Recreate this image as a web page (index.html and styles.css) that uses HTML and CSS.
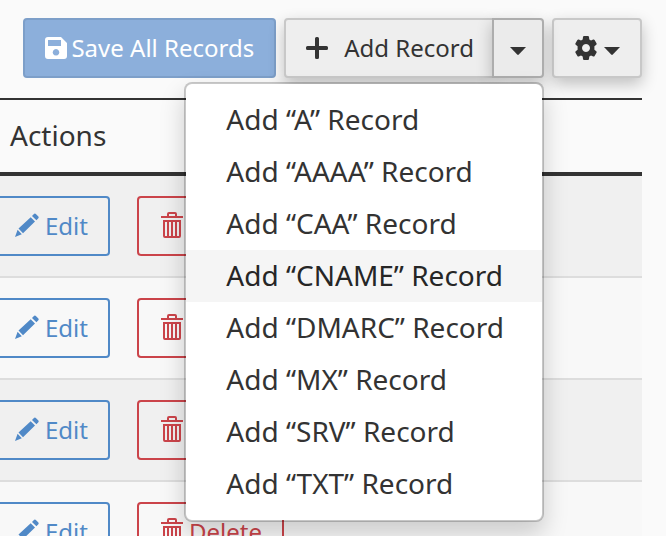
FILE: index.html
```html
<!DOCTYPE html>
<html lang="en">
  <head>
    <meta charset="UTF-8" />
    <title>Zone Records</title>
    <link rel="stylesheet" href="styles.css">
  </head>
  <body>
    <svg class="sprite" aria-hidden="true">
      <symbol id="pencil" viewBox="0 0 24 24">
        <path d="M3.500 15.500 15.700 4.200 20 8.600 8 20.200zM2.600 16.800l4.200 4.500L0 24zM17 3l1.700-1.800q1.200-1.200 2.400 0l2 2q1.200 1.200 0 2.400L21.400 7.200z" />
      </symbol>
      <symbol id="trash" viewBox="0 0 24 26">
        <path fill-rule="evenodd" d="M2 4h6V2q0-2 2-2h6q2 0 2 2v2h6v2H2zM10 4h6V2h-6zM4 8h18v16q0 2-2 2H6q-2 0-2-2zM6 10v14h2V10zM10 10v14h2V10zM14 10v14h2V10zM18 10v14h2V10z" />
      </symbol>
      <symbol id="caret" viewBox="0 0 16 8">
        <path d="M0 0h16L8.800 7.500q-.8.8-1.600 0z" />
      </symbol>
    </svg>

    <div class="toolbar">
      <button class="btn btn-primary" disabled>
        <svg class="icon" viewBox="0 0 22 22"><path fill-rule="evenodd" d="M3 0h13l6 6v13q0 3-3 3H3q-3 0-3-3V3q0-3 3-3zM3 3v6h13V3zM11 12a3.300 3.300 0 1 0 .01 0z" /></svg>
        Save All Records
      </button>
      <div class="btn-group">
        <button class="btn btn-default btn-add">
          <svg class="icon" viewBox="0 0 22 22"><path d="M9 1.500Q9 0 10.500 0h1Q13 0 13 1.500V9h7.500Q22 9 22 10.500v1q0 1.500-1.500 1.500H13v7.500q0 1.500-1.500 1.500h-1Q9 22 9 20.500V13H1.500Q0 13 0 11.500v-1Q0 9 1.500 9H9z" /></svg>
          Add Record
        </button>
        <button class="btn btn-default btn-toggle" aria-label="Toggle record types">
          <svg class="caret"><use href="#caret" /></svg>
        </button>
        <ul class="menu">
          <li><a href="#">Add “A” Record</a></li>
          <li><a href="#">Add “AAAA” Record</a></li>
          <li><a href="#">Add “CAA” Record</a></li>
          <li><a href="#" class="active">Add “CNAME” Record</a></li>
          <li><a href="#">Add “DMARC” Record</a></li>
          <li><a href="#">Add “MX” Record</a></li>
          <li><a href="#">Add “SRV” Record</a></li>
          <li><a href="#">Add “TXT” Record</a></li>
        </ul>
      </div>
      <button class="btn btn-default" aria-label="Settings">
        <svg class="gear" viewBox="0 0 24 24"><path fill-rule="evenodd" d="M9 1q.1-1 1.100-1h3.800q1 0 1.100 1l.3 2.400 1.700 1 2.200-.9q.9-.3 1.400.5l1.900 3.300q.5.800-.2 1.400l-1.900 1.500v3.600l1.900 1.500q.7.600.2 1.400L20.600 20q-.5.800-1.400.5l-2.200-.9-1.700 1L15 23q-.1 1-1.100 1h-3.800Q9.100 24 9 23l-.3-2.400-1.700-1-2.200.9q-.9.300-1.400-.5l-1.900-3.300q-.5-.8.2-1.400l1.900-1.500v-3.600L1.700 8.700Q1 8.100 1.500 7.300L3.400 4q.5-.8 1.400-.5l2.200.9 1.700-1zM12 8a4 4 0 1 0 .01 0z" /></svg>
        <svg class="caret"><use href="#caret" /></svg>
      </button>
    </div>

    <table class="records">
      <thead>
        <tr><th>Actions</th></tr>
      </thead>
      <tbody>
        <tr>
          <td>
            <div class="actions">
              <button class="btn btn-edit"><svg class="row-icon"><use href="#pencil" /></svg>Edit</button>
              <button class="btn btn-delete"><svg class="row-icon"><use href="#trash" /></svg>Delete</button>
            </div>
          </td>
        </tr>
        <tr>
          <td>
            <div class="actions">
              <button class="btn btn-edit"><svg class="row-icon"><use href="#pencil" /></svg>Edit</button>
              <button class="btn btn-delete"><svg class="row-icon"><use href="#trash" /></svg>Delete</button>
            </div>
          </td>
        </tr>
        <tr>
          <td>
            <div class="actions">
              <button class="btn btn-edit"><svg class="row-icon"><use href="#pencil" /></svg>Edit</button>
              <button class="btn btn-delete"><svg class="row-icon"><use href="#trash" /></svg>Delete</button>
            </div>
          </td>
        </tr>
        <tr>
          <td>
            <div class="actions">
              <button class="btn btn-edit"><svg class="row-icon"><use href="#pencil" /></svg>Edit</button>
              <button class="btn btn-delete"><svg class="row-icon"><use href="#trash" /></svg>Delete</button>
            </div>
          </td>
        </tr>
      </tbody>
    </table>
  </body>
</html>
```
FILE: styles.css
```css
* {
  box-sizing: border-box;
}
body {
  margin: 0;
  padding: 18px 24px 0 0;
  height: 100vh;
  overflow: hidden;
  background: #fafafa;
  color: #333;
  font-family: "Noto Sans", "Open Sans", sans-serif;
  font-size: 28px;
  line-height: 40px;
}
.sprite {
  position: absolute;
  width: 0;
  height: 0;
}
svg {
  fill: currentColor;
  flex: none;
}
.toolbar {
  display: flex;
  justify-content: flex-end;
  gap: 8px;
  margin-bottom: 20px;
}
.btn {
  display: flex;
  align-items: center;
  gap: 6px;
  height: 60px;
  padding: 0 20px 2px;
  border: 2px solid;
  border-radius: 4px;
  background: none;
  font-family: inherit;
  font-size: 24px;
  white-space: nowrap;
}
.btn-primary {
  gap: 4px;
  background: #8cafdb;
  border-color: #7d9fc9;
  color: #fff;
}
.btn-default {
  background: #eee;
  border-color: #c8c8c8;
  color: #333;
  box-shadow: 0 6px 16px rgba(0, 0, 0, 0.24);
}
.btn-group {
  position: relative;
  display: flex;
}
.btn-add {
  gap: 16px;
  padding-right: 18px;
  border-radius: 4px 0 0 4px;
}
.btn-toggle {
  margin-left: -2px;
  padding: 0 16px 2px;
  background: #ebebeb;
  border-color: #adadad;
  border-radius: 0 4px 4px 0;
}
.icon {
  width: 22px;
  height: 22px;
  margin-top: 2px;
}
.gear {
  width: 24px;
  height: 24px;
  margin-top: 2px;
}
.caret {
  width: 16px;
  height: 8px;
  margin-top: 8px;
}
.row-icon {
  width: 24px;
  height: 26px;
}

/* dropdown */
.menu {
  position: absolute;
  top: 64px;
  right: 0;
  z-index: 10;
  margin: 0;
  padding: 10px 0;
  list-style: none;
  background: #fff;
  background-clip: padding-box;
  border: 2px solid rgba(0, 0, 0, 0.2);
  border-radius: 8px;
  box-shadow: 0 12px 24px rgba(0, 0, 0, 0.18);
}
.menu a {
  display: block;
  padding: 5px 38px 7px 40px;
  color: #333;
  text-decoration: none;
  white-space: nowrap;
}
.menu .active {
  background: #f5f5f5;
  color: #262626;
}

/* records table */
.records {
  width: 100%;
  border-collapse: separate;
  border-spacing: 0;
}
.records th {
  padding: 15px 10px 17px;
  border-top: 2px solid #333;
  border-bottom: 4px solid #333;
  font-weight: normal;
  text-align: left;
}
.records td {
  padding: 20px 0;
  border-bottom: 2px solid #ddd;
  background: #f8f8f8;
}
.records tr:nth-child(odd) td {
  background: #f0f0f0;
}
.actions {
  display: flex;
  gap: 27px;
  margin-left: -7px;
}
.btn-edit {
  color: #5089c7;
  border-color: #5089c7;
}
.btn-delete {
  color: #cb444a;
  border-color: #cb444a;
}
```
